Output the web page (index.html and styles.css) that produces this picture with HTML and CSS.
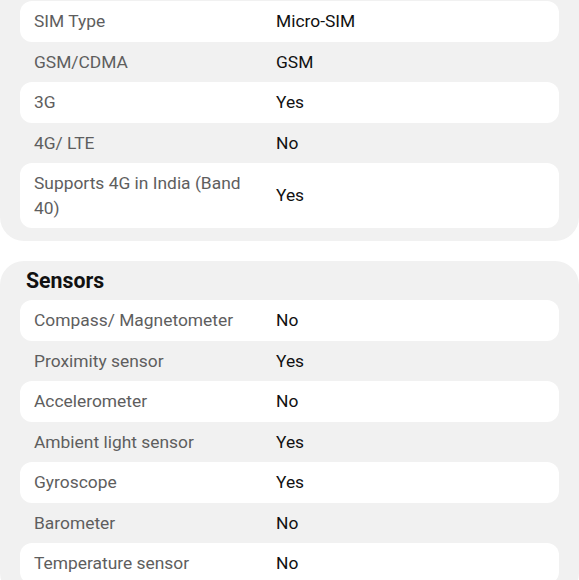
FILE: index.html
```html
<!DOCTYPE html>
<html>
<head>
<meta charset="utf-8">
<link rel="stylesheet" href="styles.css">
</head>
<body>
<section class="card card-first">
  <div class="row alt"><div class="label">SIM Type</div><div class="value">Micro-SIM</div></div>
  <div class="row"><div class="label">GSM/CDMA</div><div class="value">GSM</div></div>
  <div class="row alt"><div class="label">3G</div><div class="value">Yes</div></div>
  <div class="row"><div class="label">4G/ LTE</div><div class="value">No</div></div>
  <div class="row alt"><div class="label">Supports 4G in India (Band 40)</div><div class="value">Yes</div></div>
</section>
<section class="card">
  <h2 class="title">Sensors</h2>
  <div class="row alt"><div class="label">Compass/ Magnetometer</div><div class="value">No</div></div>
  <div class="row"><div class="label">Proximity sensor</div><div class="value">Yes</div></div>
  <div class="row alt"><div class="label">Accelerometer</div><div class="value">No</div></div>
  <div class="row"><div class="label">Ambient light sensor</div><div class="value">Yes</div></div>
  <div class="row alt"><div class="label">Gyroscope</div><div class="value">Yes</div></div>
  <div class="row"><div class="label">Barometer</div><div class="value">No</div></div>
  <div class="row alt"><div class="label">Temperature sensor</div><div class="value">No</div></div>
</section>
</body>
</html>
```
FILE: styles.css
```css
html, body {
  margin: 0;
  padding: 0;
  background: #ffffff;
  font-family: Roboto, "Liberation Sans", sans-serif;
}
body {
  overflow: hidden;
}
.card {
  background: #f1f1f1;
  border-radius: 24px;
  padding: 0 20px 13px;
  margin-bottom: 20px;
}
.card-first {
  margin-top: -30px;
  padding-top: 31px;
}
.title {
  margin: 0;
  padding: 6px 6px 0;
  height: 33px;
  font-size: 21.3px;
  font-weight: 700;
  color: #111;
  line-height: 27px;
}
.row {
  display: grid;
  grid-template-columns: 230px 1fr;
  column-gap: 12px;
  align-items: center;
  padding: 8px 14px;
  border-radius: 12px;
  font-size: 17.4px;
  line-height: 24.5px;
}
.row.alt {
  background: #ffffff;
}
.label {
  color: #5e5e5e;
}
.value {
  color: #111111;
}
```
